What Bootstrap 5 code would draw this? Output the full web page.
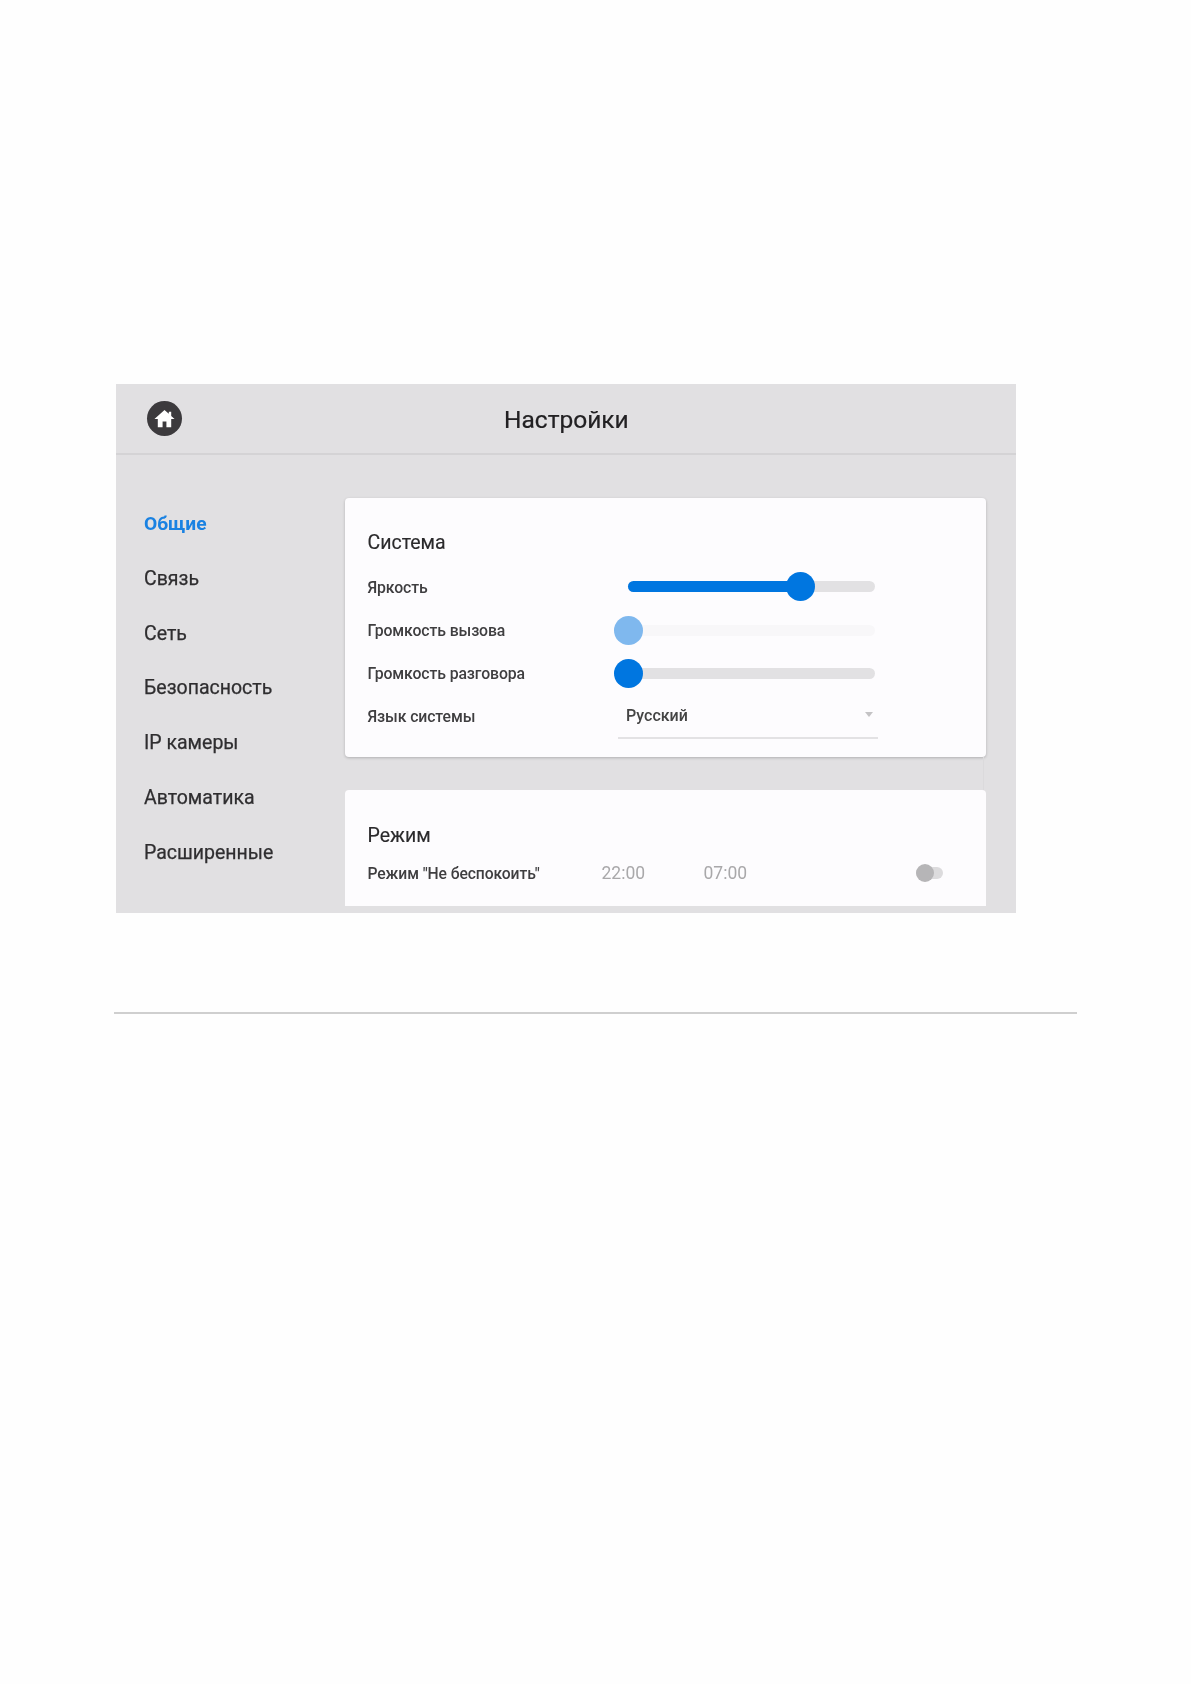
<!DOCTYPE html>
<html lang="ru">
<head>
<meta charset="utf-8">
<title>Настройки</title>
<link href="https://cdn.jsdelivr.net/npm/bootstrap@5.3.0/dist/css/bootstrap.min.css" rel="stylesheet">
<style>
body{background:#fefefe;font-family:Roboto,"Liberation Sans",sans-serif;color:#333;min-height:1684px}
.sheet{padding:384px 0 0 116px}
.device{width:900px;height:529px;background:#e1e0e2;overflow:hidden;filter:blur(.45px)}
.topbar{height:71px;border-bottom:2px solid #d4d3d5;padding-left:31px}
.home-btn{width:35px;height:35px;border-radius:50%;background:#3c3a3d;flex:none;margin-top:-1px}
.top-title{margin-left:322px;font-size:24.5px;line-height:30px;color:#222123;margin-top:2px;-webkit-text-stroke:.2px #222123}
.side{width:229px;padding:42px 0 0 28px;flex:none}
.side-item{height:54.8px;line-height:54.8px;font-size:19.5px;color:#2f2e30;-webkit-text-stroke:.25px #2f2e30;text-decoration:none;display:block;white-space:nowrap}
.side-item.on{color:#1a82e2;font-weight:700;font-size:19.2px;-webkit-text-stroke:0}
.pane{width:641px;padding-top:43px}
.sheet-card{background:#fdfcfe;border:0;border-radius:4px;box-shadow:0 1px 3px rgba(0,0,0,.22);padding:30px 0 0 22.500px}
.sheet-card.first{height:259px;margin-bottom:33px}
.sheet-card.first::after{content:"";position:absolute;top:100%;right:2px;width:1px;height:33px;background:#dbdadc}
.sheet-card.second{height:116px;padding-top:30.500px;border-radius:4px 4px 0 0;box-shadow:none}
.card-head{font-size:19.5px;line-height:30px;color:#2b2a2c;-webkit-text-stroke:.15px #2b2a2c;margin-bottom:7.500px}
.second .card-head{margin-bottom:0}
.line{height:43.2px;font-size:15.8px;color:#3f3e40;padding-top:1px}
.line-label{width:249.500px;flex:none;font-weight:500;letter-spacing:-.1px}
.slider-box{position:relative;width:247px;height:11px;margin:-1.500px 0 0 11px;border-radius:6px;background:#e2e1e3}
.slider-box.faded{background:#f8f7f9}
.slider-fill{position:absolute;left:0;top:0;bottom:0;border-radius:6px;background:#0076e0}
.slider-knob{position:absolute;top:50%;width:29px;height:29px;margin:-14.5px 0 0 -14.5px;border-radius:50%;background:#0076e0}
.slider-box.faded .slider-knob{background:#7fb8ee}
.pick{width:260px;height:43px;margin-left:1px;border-bottom:2px solid #e3e2e4;padding:0 5.500px 2px 8px;margin-top:1px;font-size:16px;font-weight:500;color:#444}
.pick-arrow{width:0;height:0;border-left:4.5px solid transparent;border-right:4.5px solid transparent;border-top:5px solid #c4c3c5;margin-top:-2px}
.mode-row{height:46px;font-size:15.7px;color:#3f3e40}
.mode-label{width:234px;flex:none;font-weight:500;letter-spacing:-.1px}
.time-a{width:102px;flex:none;font-size:17.5px;color:#a9a8aa}
.time-b{width:212.5px;flex:none;font-size:17.5px;color:#a9a8aa}
.toggle-box{position:relative;width:27px;height:12px;margin-top:-1.500px;border-radius:6px;background:#dcdbdd}
.toggle-knob{position:absolute;left:0;top:-3px;width:18px;height:18px;border-radius:50%;background:#b6b5b7}
.rule{margin:99px 0 0 -2px;width:963px;height:2px;background:#cfcfcf;opacity:1;border:0}
</style>
</head>
<body>
<div class="sheet">
  <div class="device">
    <div class="topbar d-flex align-items-center">
      <div class="home-btn d-flex align-items-center justify-content-center">
        <svg width="23" height="23" viewBox="0 0 24 24" aria-hidden="true"><path fill="#fff" d="M12 3 1.500 12.500H5V21h5v-6h4v6h5v-8.500h3.500L19 9.400V5h-2.500v2.100z"/></svg>
      </div>
      <div class="top-title">Настройки</div>
    </div>
    <div class="d-flex">
      <nav class="side">
        <a class="side-item on" href="#">Общие</a>
        <a class="side-item" href="#">Связь</a>
        <a class="side-item" href="#">Сеть</a>
        <a class="side-item" href="#">Безопасность</a>
        <a class="side-item" href="#">IP камеры</a>
        <a class="side-item" href="#">Автоматика</a>
        <a class="side-item" href="#">Расширенные</a>
      </nav>
      <div class="pane">
        <div class="card sheet-card first">
          <div class="card-head">Система</div>
          <div class="line d-flex align-items-center">
            <div class="line-label">Яркость</div>
            <div class="slider-box"><div class="slider-fill" style="width:70%"></div><div class="slider-knob" style="left:70%"></div></div>
          </div>
          <div class="line d-flex align-items-center">
            <div class="line-label">Громкость вызова</div>
            <div class="slider-box faded"><div class="slider-knob" style="left:0"></div></div>
          </div>
          <div class="line d-flex align-items-center">
            <div class="line-label">Громкость разговора</div>
            <div class="slider-box"><div class="slider-knob" style="left:0"></div></div>
          </div>
          <div class="line d-flex align-items-center">
            <div class="line-label">Язык системы</div>
            <div class="pick d-flex align-items-center justify-content-between"><span>Русский</span><span class="pick-arrow"></span></div>
          </div>
        </div>
        <div class="card sheet-card second">
          <div class="card-head">Режим</div>
          <div class="mode-row d-flex align-items-center">
            <div class="mode-label">Режим "Не беспокоить"</div>
            <div class="time-a">22:00</div>
            <div class="time-b">07:00</div>
            <div class="toggle-box"><div class="toggle-knob"></div></div>
          </div>
        </div>
      </div>
    </div>
  </div>
  <hr class="rule">
</div>
<script src="https://cdn.jsdelivr.net/npm/bootstrap@5.3.0/dist/js/bootstrap.bundle.min.js"></script>
</body>
</html>
